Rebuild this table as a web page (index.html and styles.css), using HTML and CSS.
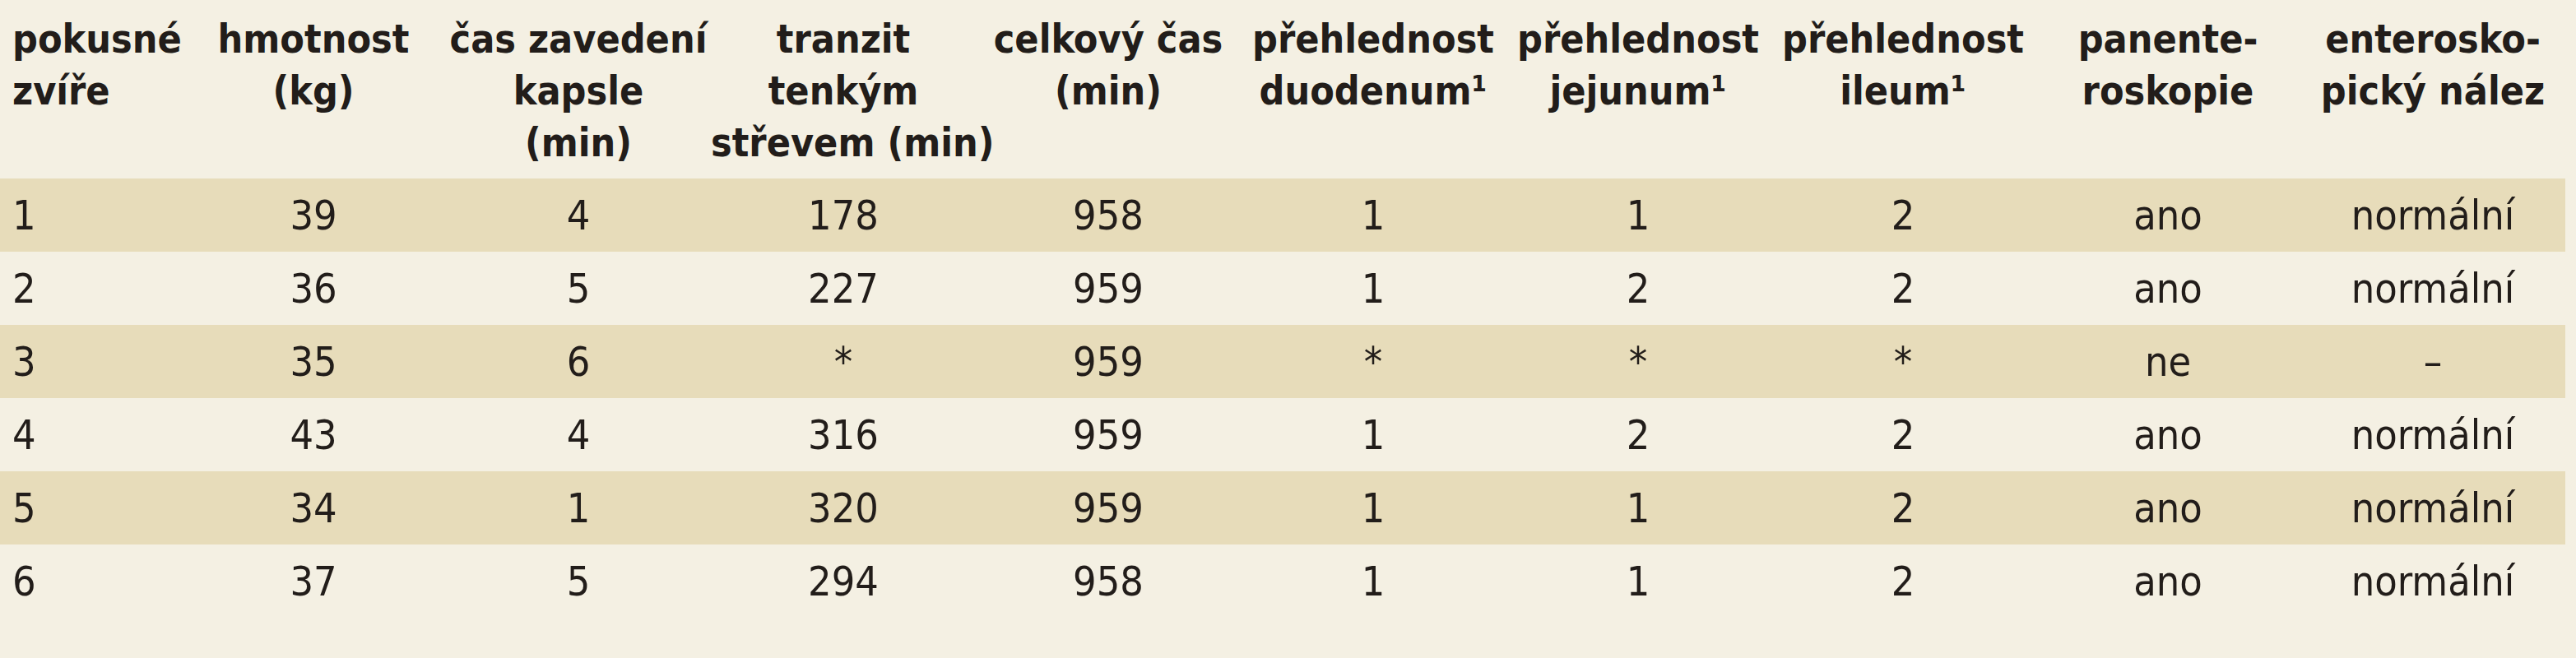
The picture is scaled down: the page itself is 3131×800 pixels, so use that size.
FILE: index.html
```html
<!DOCTYPE html>
<html lang="cs">
<head>
<meta charset="utf-8">
<title>Tabulka</title>
<link rel="stylesheet" href="styles.css">
</head>
<body>
<table class="data">
  <colgroup>
    <col class="c-first">
    <col class="c"><col class="c"><col class="c"><col class="c"><col class="c">
    <col class="c"><col class="c"><col class="c"><col class="c">
  </colgroup>
  <thead>
    <tr>
      <th class="left">pokusné<br>zvíře</th>
      <th>hmotnost<br>(kg)</th>
      <th>čas zavedení<br>kapsle<br>(min)</th>
      <th>tranzit<br>tenkým<br>střevem (min)</th>
      <th>celkový čas<br>(min)</th>
      <th>přehlednost<br>duodenum¹</th>
      <th>přehlednost<br>jejunum¹</th>
      <th>přehlednost<br>ileum¹</th>
      <th>panente-<br>roskopie</th>
      <th>enterosko-<br>pický nález</th>
    </tr>
  </thead>
  <tbody>
    <tr class="tan"><td class="left">1</td><td>39</td><td>4</td><td>178</td><td>958</td><td>1</td><td>1</td><td>2</td><td>ano</td><td>normální</td></tr>
    <tr><td class="left">2</td><td>36</td><td>5</td><td>227</td><td>959</td><td>1</td><td>2</td><td>2</td><td>ano</td><td>normální</td></tr>
    <tr class="tan"><td class="left">3</td><td>35</td><td>6</td><td>*</td><td>959</td><td>*</td><td>*</td><td>*</td><td>ne</td><td>–</td></tr>
    <tr><td class="left">4</td><td>43</td><td>4</td><td>316</td><td>959</td><td>1</td><td>2</td><td>2</td><td>ano</td><td>normální</td></tr>
    <tr class="tan"><td class="left">5</td><td>34</td><td>1</td><td>320</td><td>959</td><td>1</td><td>1</td><td>2</td><td>ano</td><td>normální</td></tr>
    <tr><td class="left">6</td><td>37</td><td>5</td><td>294</td><td>958</td><td>1</td><td>1</td><td>2</td><td>ano</td><td>normální</td></tr>
  </tbody>
</table>
</body>
</html>
```

FILE: styles.css
```css
html, body {
  margin: 0;
  padding: 0;
  background: #f4f0e3;
}
body {
  font-family: "DejaVu Sans Condensed", "DejaVu Sans", "Liberation Sans Narrow", sans-serif;
  font-stretch: condensed;
  color: #221d1a;
}
.data {
  width: 3118px;
  table-layout: fixed;
  border-collapse: collapse;
  border-spacing: 0;
}
.c-first { width: 220px; }
.c { width: 322px; }

.data th {
  height: 217px;
  box-sizing: border-box;
  padding: 16px 0 0 0;
  vertical-align: top;
  text-align: center;
  font-weight: bold;
  font-size: 48px;
  line-height: 63px;
  white-space: nowrap;
}
.data td {
  height: 89px;
  padding: 0;
  text-align: center;
  vertical-align: middle;
  font-size: 50px;
  line-height: 60px;
  white-space: nowrap;
}
.data th.left,
.data td.left {
  text-align: left;
  padding-left: 15px;
}
.data tr.tan td {
  background: #e7dcba;
}
```
